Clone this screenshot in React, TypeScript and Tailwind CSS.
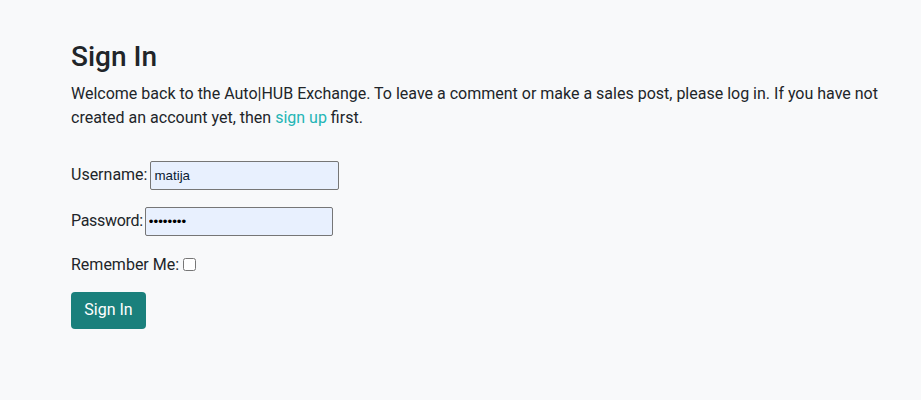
export default function App() {
  return (
    <div className="min-h-[400px] bg-[#f8f9fa] pl-[71px] pt-[40px] font-['Roboto',sans-serif] text-[16px] text-[#212529]">
      <div className="w-[830px]">
        <h1 className="mb-2 text-[28px] font-medium leading-[1.2]">Sign In</h1>
        <p className="leading-[24px]">
          Welcome back to the Auto|HUB Exchange. To leave a comment or make a sales post, please log in. If you have not created an account yet, then{" "}
          <a href="#" className="text-[#24b5b5] no-underline">sign up</a> first.
        </p>
        <form className="mt-[31px] flex flex-col items-start" onSubmit={(e) => e.preventDefault()}>
          <div className="flex h-[29px] items-center">
            <label htmlFor="u" className="mr-[3px]">Username:</label>
            <input
              id="u"
              type="text"
              defaultValue="matija"
              className="h-[29px] w-[189px] rounded-[2px] border border-[#767676] bg-[#e8f0fe] px-[3px] font-['Liberation_Sans',Arial,sans-serif] text-[13.33px] text-[#0b1a33] outline-none"
            />
          </div>
          <div className="mt-[17px] flex h-[29px] items-center">
            <label htmlFor="p" className="mr-[2px] tracking-[-0.3px]">Password:</label>
            <input
              id="p"
              type="password"
              defaultValue="matija12"
              className="h-[29px] w-[188px] rounded-[2px] border border-[#767676] bg-[#e8f0fe] px-[3px] font-['Liberation_Sans',Arial,sans-serif] text-[13.33px] text-black outline-none"
            />
          </div>
          <div className="mt-[17px] flex h-[24px] items-center">
            <label htmlFor="r">Remember Me:</label>
            <input id="r" type="checkbox" className="ml-[4px] h-[13px] w-[13px]" />
          </div>
          <button
            type="submit"
            className="mt-[15px] h-[37px] w-[75px] rounded-[4px] bg-[#1a807c] text-[16px] text-white"
          >
            Sign In
          </button>
        </form>
      </div>
    </div>
  );
}
